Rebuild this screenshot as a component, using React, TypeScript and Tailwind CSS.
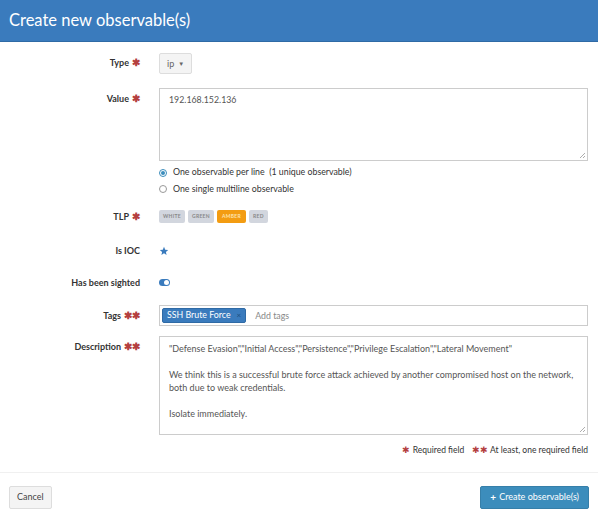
import React from 'react'

const font = { fontFamily: 'Lato, "Open Sans", sans-serif' }

function Req({ n = 1 }: { n?: number }) {
  return (
    <span className="ml-[3px] text-[#b43f3f] text-[10px] leading-none">
      {n === 2 ? '✱✱' : '✱'}
    </span>
  )
}

function Row({ label, req, children, top }: { label: string; req?: number; children: React.ReactNode; top?: boolean }) {
  return (
    <div className={`flex ${top ? 'items-start' : 'items-center'}`}>
      <div className={`w-[140px] shrink-0 text-right text-[9px] font-bold text-[#333] leading-none ${top ? 'pt-[5px]' : ''}`}>
        {label}
        {req ? <Req n={req} /> : null}
      </div>
      <div className="ml-[19px] flex-1">{children}</div>
    </div>
  )
}

export default function App() {
  return (
    <div className="w-[598px] h-[518px] bg-white text-[#333] overflow-hidden" style={font}>
      <div className="h-[42px] bg-[#3a7bbd] flex items-center px-[9px] border-b border-[#2f6aa5]">
        <h1 className="text-[16.5px] text-white font-normal">Create new observable(s)</h1>
      </div>

      <div className="pr-[10px] pt-[7px]">
        <Row label="Type" req={1}>
          <div className="inline-flex items-center h-[21px] px-[7px] border border-[#ddd] bg-[#f4f4f4] rounded-[2px] text-[9px] text-[#666]">
            ip
            <span className="ml-[4px] text-[6px]">▼</span>
          </div>
        </Row>

        <div className="mt-[14px]">
          <Row label="Value" req={1} top>
            <div className="h-[73px] border border-[#ccc] px-[9px] pt-[4px] text-[8.8px] text-[#555] relative">
              192.168.152.136
              <Grip />
            </div>
          </Row>
        </div>

        <div className="ml-[159px] mt-[7px] flex flex-col gap-[8px] text-[8.8px] text-[#333]">
          <label className="flex items-center gap-[6px] leading-none">
            <span className="w-[8px] h-[8px] rounded-full border border-[#3c8dbc] flex items-center justify-center">
              <span className="w-[4px] h-[4px] rounded-full bg-[#3c8dbc]" />
            </span>
            One observable per line&nbsp; (1 unique observable)
          </label>
          <label className="flex items-center gap-[6px] leading-none">
            <span className="w-[8px] h-[8px] rounded-full border border-[#999]" />
            One single multiline observable
          </label>
        </div>

        <div className="mt-[16px]">
          <Row label="TLP" req={1}>
            <div className="flex gap-[3px] text-[5px] font-bold uppercase leading-none tracking-[0.3px]">
              <span className="h-[13px] px-[4px] flex items-center rounded-[2px] bg-[#d2d6de] text-[#888]">White</span>
              <span className="h-[13px] px-[4px] flex items-center rounded-[2px] bg-[#d2d6de] text-[#888]">Green</span>
              <span className="h-[13px] px-[5px] flex items-center rounded-[2px] bg-[#f39c12] text-[#fde3b0]">Amber</span>
              <span className="h-[13px] px-[4px] flex items-center rounded-[2px] bg-[#d2d6de] text-[#888]">Red</span>
            </div>
          </Row>
        </div>

        <div className="mt-[23px]">
          <Row label="Is IOC">
            <svg width="10" height="10" viewBox="0 0 24 24" className="text-[#3a7bbd]">
              <path fill="currentColor" d="M12 2l2.9 6.9 7.1.6-5.4 4.7 1.6 7.1L12 17.6 5.8 21.3l1.6-7.1L2 9.5l7.1-.6z" />
            </svg>
          </Row>
        </div>

        <div className="mt-[22px]">
          <Row label="Has been sighted">
            <div className="w-[11px] h-[7px] rounded-full bg-[#3a7bbd] relative">
              <span className="absolute right-[1px] top-[1px] w-[5px] h-[5px] rounded-full bg-white" />
            </div>
          </Row>
        </div>

        <div className="mt-[18px]">
          <Row label="Tags" req={2}>
            <div className="h-[21px] border border-[#ccc] flex items-center px-[2px] gap-[9px]">
              <span className="h-[15px] flex items-center bg-[#3a7bbd] border border-[#2f6aa5] text-white text-[8.8px] px-[4px] rounded-[2px] leading-none">
                SSH Brute Force
                <span className="ml-[6px] text-[8px] text-[#1d4f80]">×</span>
              </span>
              <span className="text-[8.8px] text-[#888]">Add tags</span>
            </div>
          </Row>
        </div>

        <div className="mt-[10px]">
          <Row label="Description" req={2} top>
            <div className="h-[99px] border border-[#ccc] px-[9px] pt-[5px] text-[9px] leading-[13px] text-[#555] relative">
              <p>"Defense Evasion","Initial Access","Persistence","Privilege Escalation","Lateral Movement"</p>
              <p className="mt-[13px]">We think this is a successful brute force attack achieved by another compromised host on the network, both due to weak credentials.</p>
              <p className="mt-[13px]">Isolate immediately.</p>
              <Grip />
            </div>
          </Row>
        </div>

        <div className="mt-[9px] flex justify-end items-center text-[8.5px] text-[#333] gap-[8px]">
          <span><span className="text-[#b43f3f]">✱</span> Required field</span>
          <span><span className="text-[#b43f3f]">✱✱</span> At least, one required field</span>
        </div>
      </div>

      <div className="mt-[15px] border-t border-[#f0f0f0] px-[9px] pt-[13px] flex justify-between">
        <button className="h-[23px] px-[7px] border border-[#ddd] bg-[#f4f4f4] rounded-[2px] text-[9px] text-[#444]">Cancel</button>
        <button className="h-[23px] px-[9px] border border-[#367fa9] bg-[#3c8dbc] rounded-[2px] text-[9px] text-white flex items-center gap-[3px]">
          <span className="font-bold text-[10px] leading-none">+</span>
          Create observable(s)
        </button>
      </div>
    </div>
  )
}

function Grip() {
  return (
    <svg width="7" height="7" viewBox="0 0 7 7" className="absolute right-[1px] bottom-[1px]">
      <path d="M6 1L1 6M6 4L4 6" stroke="#999" strokeWidth="0.8" />
    </svg>
  )
}
